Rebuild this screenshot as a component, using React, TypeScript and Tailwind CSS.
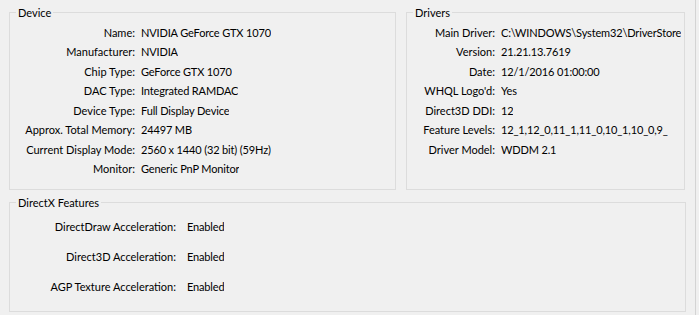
const DEVICE_ROWS: [string, string][] = [
  ['Name', 'NVIDIA GeForce GTX 1070'],
  ['Manufacturer', 'NVIDIA'],
  ['Chip Type', 'GeForce GTX 1070'],
  ['DAC Type', 'Integrated RAMDAC'],
  ['Device Type', 'Full Display Device'],
  ['Approx. Total Memory', '24497 MB'],
  ['Current Display Mode', '2560 x 1440 (32 bit) (59Hz)'],
  ['Monitor', 'Generic PnP Monitor'],
];

// values are cut at the box edge in the original dialog
const DRIVER_ROWS: [string, string][] = [
  ['Main Driver', 'C:\\WINDOWS\\System32\\DriverStore'],
  ['Version', '21.21.13.7619'],
  ['Date', '12/1/2016 01:00:00'],
  ["WHQL Logo'd", 'Yes'],
  ['Direct3D DDI', '12'],
  ['Feature Levels', '12_1,12_0,11_1,11_0,10_1,10_0,9_'],
  ['Driver Model', 'WDDM 2.1'],
];

const FEATURE_ROWS: [string, string][] = [
  ['DirectDraw Acceleration', 'Enabled'],
  ['Direct3D Acceleration', 'Enabled'],
  ['AGP Texture Acceleration', 'Enabled'],
];

function GroupBox({ title, className, children }: { title: string; className: string; children: React.ReactNode }) {
  return (
    <div className={`relative border border-[#dcdcdc] ${className}`}>
      <span className="absolute left-[6px] top-[-8px] bg-[#f0f0f0] px-[2px] leading-[16px] text-black">{title}</span>
      {children}
    </div>
  );
}

function InfoRow({ label, value, labelWidth, gap, height }: { label: string; value: string; labelWidth: string; gap: string; height: string }) {
  return (
    <div className={`flex items-center ${height} ${gap}`}>
      <span className={`shrink-0 text-right whitespace-nowrap ${labelWidth}`}>{label}:</span>
      <span className="min-w-0 whitespace-nowrap overflow-hidden tracking-[-0.15px]">{value}</span>
    </div>
  );
}

export default function App() {
  return (
    <div
      className="w-[699px] h-[315px] bg-[#f0f0f0] flex text-[11px] text-black overflow-hidden"
      style={{ fontFamily: 'Lato, "Liberation Sans", sans-serif' }}
    >
      <div className="w-[695px] shrink-0 pl-[9px] pt-[12px] flex flex-col gap-[12px]">
        <div className="flex gap-[10px]">
          <GroupBox title="Device" className="w-[387px] h-[178px] pt-[10px]">
            {DEVICE_ROWS.map(([l, v]) => (
              <InfoRow key={l} label={l} value={v} labelWidth="w-[125px]" gap="gap-[6px]" height="h-[19.5px]" />
            ))}
          </GroupBox>
          <GroupBox title="Drivers" className="w-[279px] h-[178px] pt-[10px] pr-[2px]">
            {DRIVER_ROWS.map(([l, v]) => (
              <InfoRow key={l} label={l} value={v} labelWidth="w-[88px]" gap="gap-[6px]" height="h-[19.5px]" />
            ))}
          </GroupBox>
        </div>
        <GroupBox title="DirectX Features" className="w-[677px] h-[110px] pt-[9px]">
          {FEATURE_ROWS.map(([l, v]) => (
            <InfoRow key={l} label={l} value={v} labelWidth="w-[166px]" gap="gap-[11px]" height="h-[30px]" />
          ))}
        </GroupBox>
      </div>
      <div className="w-[1px] h-full bg-[#d4d4d4]" />
    </div>
  );
}
